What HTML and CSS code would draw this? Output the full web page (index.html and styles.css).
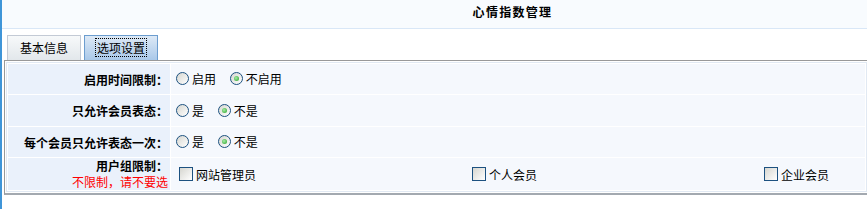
FILE: index.html
```html
<!DOCTYPE html>
<html lang="zh-CN">
<head>
  <meta charset="UTF-8">
  <title>心情指数管理</title>
  <link rel="stylesheet" href="styles.css">
</head>
<body>
  <!-- Page title -->
  <div class="title-bar"><span>心情指数管理</span></div>

  <!-- Tabs -->
  <div class="tabs">
    <div class="tab">基本信息</div>
    <div class="tab tab-active"><span class="focus">选项设置</span></div>
  </div>

  <!-- Options form -->
  <div class="panel">
    <table class="form-table">
      <tr class="row-a">
        <td class="label">启用时间限制：</td>
        <td class="value">
          <label class="opt"><span class="radio"></span>启用</label>
          <label class="opt"><span class="radio checked"></span>不启用</label>
        </td>
      </tr>
      <tr class="row-b">
        <td class="label">只允许会员表态：</td>
        <td class="value">
          <label class="opt"><span class="radio"></span>是</label>
          <label class="opt"><span class="radio checked"></span>不是</label>
        </td>
      </tr>
      <tr class="row-a">
        <td class="label">每个会员只允许表态一次：</td>
        <td class="value">
          <label class="opt"><span class="radio"></span>是</label>
          <label class="opt"><span class="radio checked"></span>不是</label>
        </td>
      </tr>
      <tr class="row-c">
        <td class="label label-two">用户组限制：<br><span class="hint">不限制，请不要选</span></td>
        <td class="value">
          <div class="groups">
            <label class="opt"><span class="check"></span>网站管理员</label>
            <label class="opt"><span class="check"></span>个人会员</label>
            <label class="opt"><span class="check"></span>企业会员</label>
          </div>
        </td>
      </tr>
    </table>
  </div>
</body>
</html>
```

FILE: styles.css
```css
/* Reset */
* {
  box-sizing: border-box;
  margin: 0;
  padding: 0;
}

body {
  font-family: "Noto Sans CJK SC", "DejaVu Sans", sans-serif;
  font-size: 12px;
  color: #000;
  background-color: #fff;
  border-left: 2px solid #3f95d8;
  min-height: 100vh;
  overflow: hidden;
}

/* Title bar */
.title-bar {
  height: 29px;
  background-color: #f8fbfe;
  border-bottom: 1px solid #d9e7f7;
  padding-left: 156px;
  text-align: center;
  line-height: 24px;
}

.title-bar span {
  font-weight: bold;
  letter-spacing: 1.3px;
}

/* Tabs */
.tabs {
  display: flex;
  gap: 3px;
  margin-top: 6px;
  padding-left: 5px;
  height: 25px;
}

.tab {
  width: 74px;
  height: 25px;
  border: 1px solid #c3cad5;
  border-bottom: none;
  background: linear-gradient(#f7f9fa, #e2e7eb);
  text-align: center;
  line-height: 23px;
}

.tab-active {
  border-color: #6c9dcf;
  background: linear-gradient(#dde9f6, #a9c8e9);
}

.focus {
  border: 1px dotted #000;
  padding: 0 1px;
}

/* Panel + table */
.panel {
  margin-left: 2px;
  border-top: 1px solid #999;
  border-left: 1px solid #999;
  border-bottom: 2px solid #a3a9b0;
  padding: 1px 0 1px 1px;
  background-color: #fff;
}

.form-table {
  width: 100%;
  border: 1px solid #e1e9f3;
  border-spacing: 1px;
  background-color: #fff;
}

.row-a td { height: 30px; }
.row-b td { height: 31px; }
.row-c td { height: 32px; }

.label {
  width: 162px;
  background-color: #eaf1fb;
  text-align: right;
  font-weight: bold;
  padding-right: 2px;
  line-height: 15px;
}

.label-two {
  line-height: 16px;
}

.hint {
  color: #f00;
  font-weight: normal;
}

.value {
  background-color: #f5f8fd;
  padding-left: 5px;
}

.opt {
  display: inline-flex;
  align-items: center;
  margin-right: 11px;
}

/* XP-style radio */
.radio {
  position: relative;
  display: inline-block;
  width: 13px;
  height: 13px;
  border: 1px solid #1c5180;
  border-radius: 50%;
  background: linear-gradient(135deg, #d6d6d0, #fff);
  margin-right: 3px;
}

.radio.checked::after {
  content: "";
  position: absolute;
  left: 3px;
  top: 3px;
  width: 5px;
  height: 5px;
  border-radius: 50%;
  background: radial-gradient(circle at 40% 40%, #a8eba8, #21a121);
}

/* XP-style checkbox */
.check {
  display: inline-block;
  width: 14px;
  height: 14px;
  border: 1px solid #1c5180;
  background: linear-gradient(135deg, #d6d6d0, #fff);
  margin-right: 3px;
}

.groups {
  display: grid;
  grid-template-columns: 293px 292px auto;
  padding-left: 3px;
}
```
